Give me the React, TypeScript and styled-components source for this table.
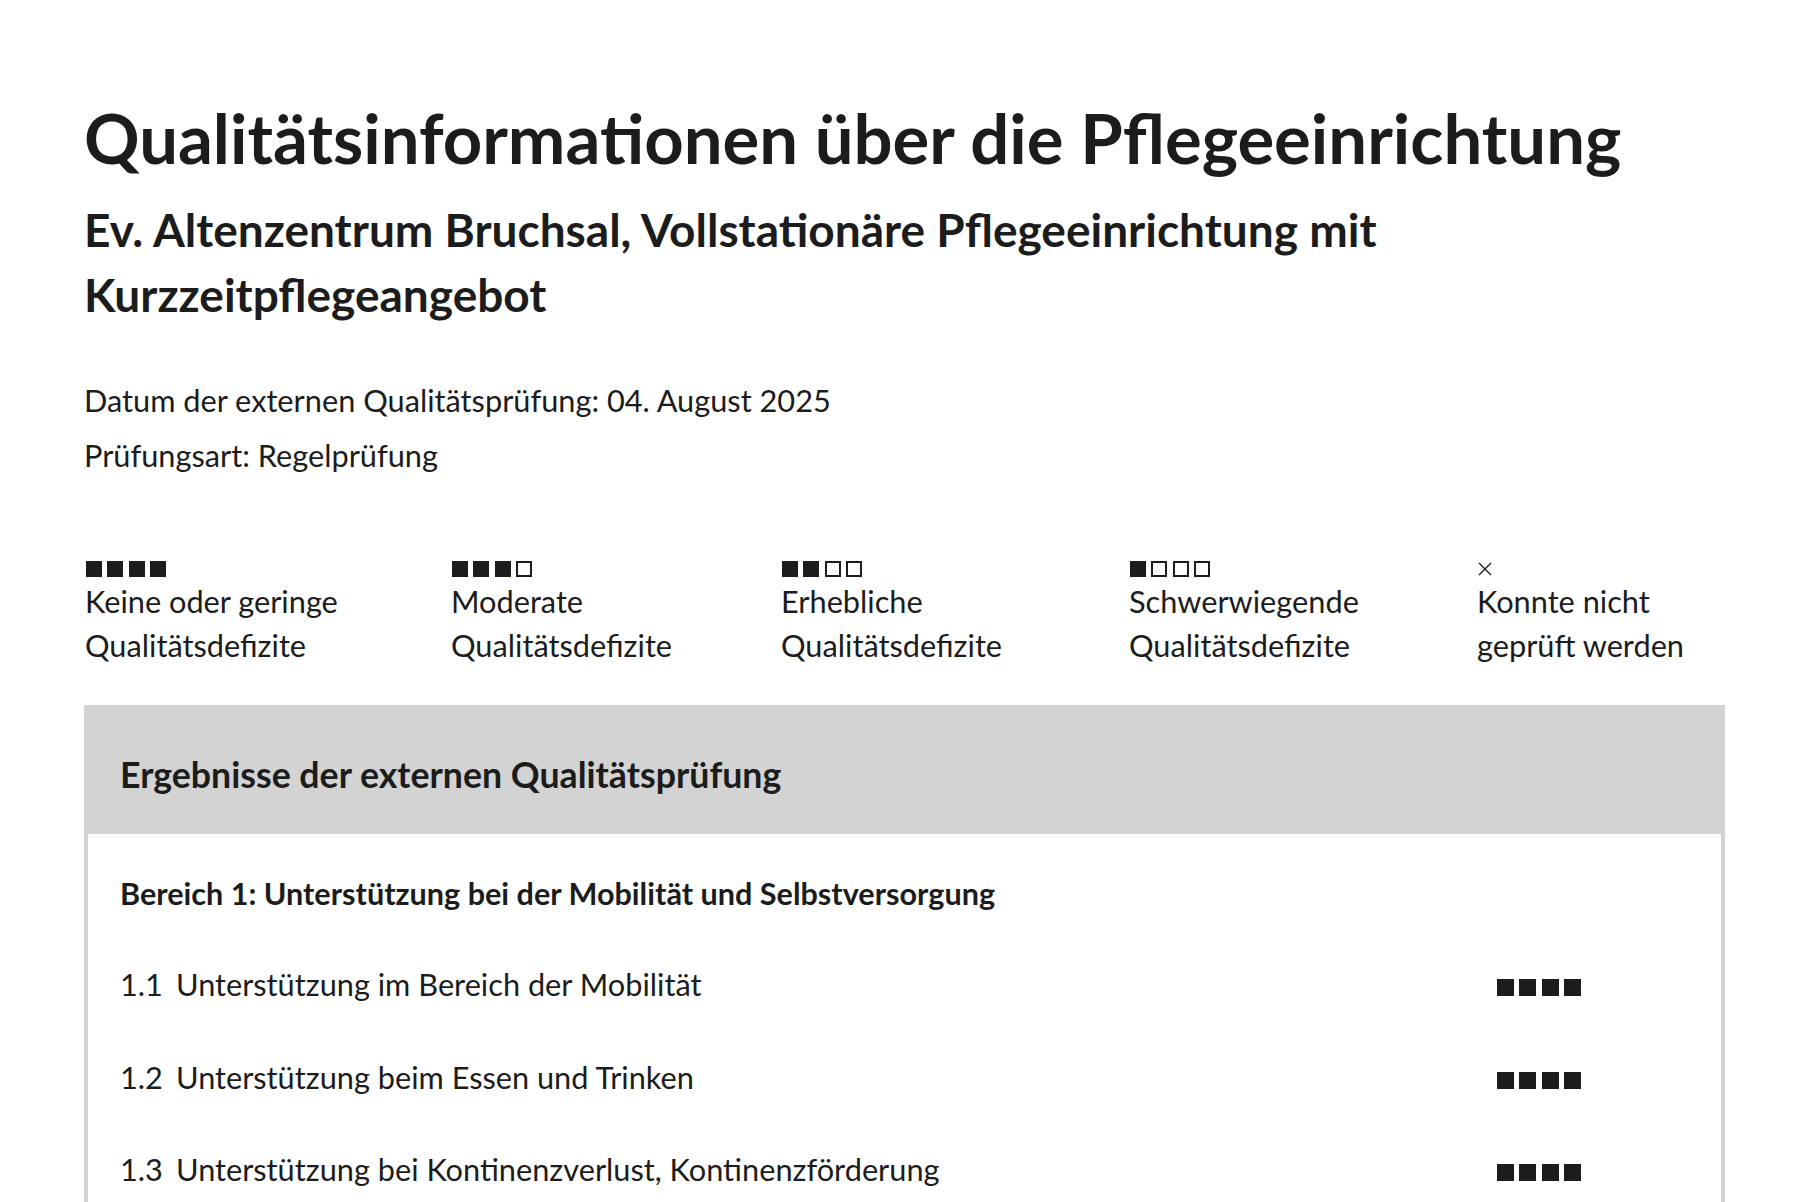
import React from 'react'
import styled, { createGlobalStyle } from 'styled-components'

type Rating = 4 | 3 | 2 | 1 | 0

interface LegendEntry {
  rating: Rating
  lines: string[]
}

interface ResultRow {
  nr: string
  label: string
  rating: Rating
}

const legend: LegendEntry[] = [
  { rating: 4, lines: ['Keine oder geringe', 'Qualitätsdefizite'] },
  { rating: 3, lines: ['Moderate', 'Qualitätsdefizite'] },
  { rating: 2, lines: ['Erhebliche', 'Qualitätsdefizite'] },
  { rating: 1, lines: ['Schwerwiegende', 'Qualitätsdefizite'] },
  { rating: 0, lines: ['Konnte nicht', 'geprüft werden'] }
]

const rows: ResultRow[] = [
  { nr: '1.1', label: 'Unterstützung im Bereich der Mobilität', rating: 4 },
  { nr: '1.2', label: 'Unterstützung beim Essen und Trinken', rating: 4 },
  {
    nr: '1.3',
    label: 'Unterstützung bei Kontinenzverlust, Kontinenzförderung',
    rating: 4
  }
]

const RatingSquares: React.FC<{ rating: Rating; size?: number }> = ({
  rating,
  size = 17
}) => {
  if (rating === 0) {
    return (
      <CrossIcon width={14} height={14} viewBox="0 0 14 14">
        <path d="M1 1 L13 13 M13 1 L1 13" stroke="#1c1c1c" strokeWidth="1.4" />
      </CrossIcon>
    )
  }
  return (
    <>
      {[0, 1, 2, 3].map(i => (
        <Square key={i} $filled={i < rating} $size={size} />
      ))}
    </>
  )
}

export default function App() {
  return (
    <>
      <GlobalStyle />
      <Page>
        <Title>Qualitätsinformationen über die Pflegeeinrichtung</Title>
        <Subtitle>
          Ev. Altenzentrum Bruchsal, Vollstationäre Pflegeeinrichtung mit
          Kurzzeitpflegeangebot
        </Subtitle>

        <Meta>
          <MetaLine>Datum der externen Qualitätsprüfung: 04. August 2025</MetaLine>
          <MetaLine>Prüfungsart: Regelprüfung</MetaLine>
        </Meta>

        <Legend>
          {legend.map(entry => (
            <LegendItem key={entry.rating}>
              <LegendIcon>
                <RatingSquares rating={entry.rating} size={16} />
              </LegendIcon>
              <LegendText>
                {entry.lines[0]}
                <br />
                {entry.lines[1]}
              </LegendText>
            </LegendItem>
          ))}
        </Legend>

        <Panel>
          <PanelHeader>Ergebnisse der externen Qualitätsprüfung</PanelHeader>
          <PanelBody>
            <AreaTitle>
              Bereich 1: Unterstützung bei der Mobilität und Selbstversorgung
            </AreaTitle>
            <RowList>
              {rows.map(row => (
                <Row key={row.nr}>
                  <RowNr>{row.nr}</RowNr>
                  <RowLabel>{row.label}</RowLabel>
                  <RowRating>
                    <RatingSquares rating={row.rating} />
                  </RowRating>
                </Row>
              ))}
            </RowList>
          </PanelBody>
        </Panel>
      </Page>
    </>
  )
}

const GlobalStyle = createGlobalStyle`
  html, body {
    margin: 0;
    padding: 0;
    background: #fff;
  }
  body {
    font-family: Lato, 'Liberation Sans', sans-serif;
    font-size: 30.72px;
    color: #1c1c1c;
  }
`

const Page = styled.main`
  width: 1641px;
  margin-left: 84px;
  padding-top: 97px;
`

const Title = styled.h1`
  margin: 0;
  font-size: 68.8px;
  line-height: 82.8px;
  font-weight: 700;
`

const Subtitle = styled.h2`
  margin: 17px 0 0;
  font-size: 46px;
  line-height: 65px;
  font-weight: 700;
`

const Meta = styled.div`
  display: flex;
  flex-direction: column;
  gap: 9.6px;
  margin-top: 51.6px;
`

const MetaLine = styled.p`
  margin: 0;
  line-height: 45px;
`

const Legend = styled.div`
  display: grid;
  grid-template-columns: 366px 330px 348px 348px 1fr;
  margin-top: 79.5px;
`

const LegendItem = styled.div`
  display: flex;
  flex-direction: column;
  padding-left: 1px;
`

const LegendIcon = styled.div`
  display: flex;
  align-items: center;
  height: 23px;
  padding-left: 1px;
`

const LegendText = styled.div`
  line-height: 43.5px;
`

const Square = styled.span<{ $filled: boolean; $size: number }>`
  display: inline-block;
  box-sizing: border-box;
  width: ${p => p.$size}px;
  height: ${p => p.$size}px;
  border: 2px solid #1c1c1c;
  background: ${p => (p.$filled ? '#1c1c1c' : '#fff')};
  & + & {
    margin-left: ${p => 22 - p.$size + (p.$size > 16 ? 0.3 : 0)}px;
  }
`

const CrossIcon = styled.svg`
  display: block;
`

const Panel = styled.section`
  margin-top: 38px;
  border: 4px solid #d3d3d3;
`

const PanelHeader = styled.h3`
  margin: 0;
  background: #d3d3d3;
  padding: 42px 32px 35px;
  font-size: 35.7px;
  line-height: 48px;
  font-weight: 700;
`

const PanelBody = styled.div`
  padding: 39px 32px 38px;
`

const AreaTitle = styled.h4`
  margin: 0;
  font-size: 30.6px;
  line-height: 42px;
  font-weight: 700;
`

const RowList = styled.div`
  display: flex;
  flex-direction: column;
  gap: 50.5px;
  margin-top: 49px;
`

const Row = styled.div`
  display: grid;
  grid-template-columns: 56px 1fr 300px;
  line-height: 42px;
`

const RowNr = styled.span``

const RowLabel = styled.span``

const RowRating = styled.div`
  text-align: center;
`
